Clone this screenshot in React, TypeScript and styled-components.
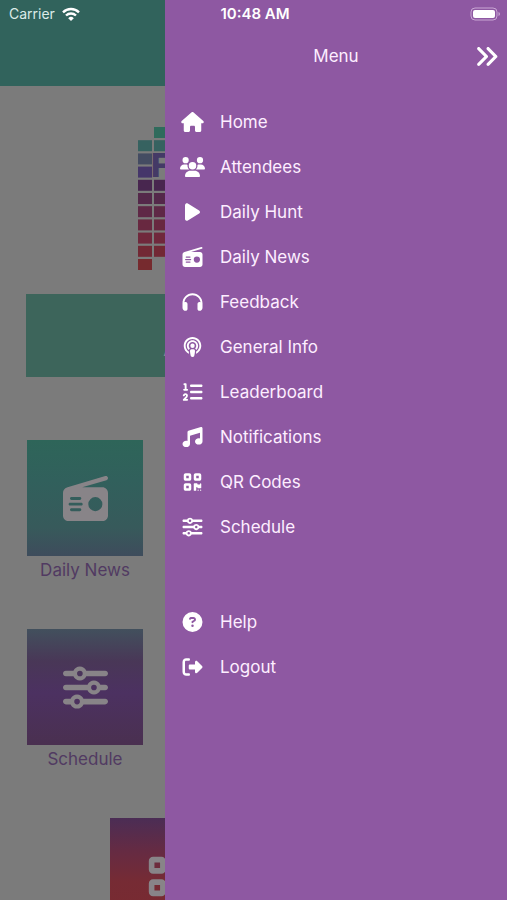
import React from "react";
import styled, { createGlobalStyle } from "styled-components";
import type { IconType } from "react-icons";
import {
  FaAnglesRight,
  FaCircleQuestion,
  FaHeadphones,
  FaHouse,
  FaListOl,
  FaMusic,
  FaPlay,
  FaPodcast,
  FaQrcode,
  FaRadio,
  FaRightFromBracket,
  FaSliders,
  FaUsers,
} from "react-icons/fa6";

const GlobalStyle = createGlobalStyle`
  *, *::before, *::after { box-sizing: border-box; }
  body {
    margin: 0;
    background: #7b7b7b;
    font-family: Inter, "Liberation Sans", sans-serif;
  }
`;

const Screen = styled.div`
  position: relative;
  height: 100vh;
  overflow: hidden;
`;

const Page = styled.main`
  display: flex;
  flex-direction: column;
`;

const TopBar = styled.header`
  height: 86px;
  background: #31635c;
`;

const LogoArea = styled.div`
  display: flex;
  justify-content: center;
  padding: 40px 0 24px;
`;

const Banner = styled.section`
  display: flex;
  align-items: center;
  height: 83px;
  margin: 0 26px 63px;
  padding: 20px 0 0 137px;
  background: #3d655b;
  color: #8b8b8b;
  font-size: 28px;
  line-height: 32px;
`;

const TileRow = styled.div<{ $inset?: boolean }>`
  display: flex;
  padding-left: ${(p) => (p.$inset ? "83px" : "0")};
  margin-bottom: 46px;
`;

const TileLink = styled.a`
  display: flex;
  flex-direction: column;
  align-items: center;
  gap: 2px;
  flex: 0 0 170px;
  color: #513a62;
  font-size: 17px;
  line-height: 25px;
  text-decoration: none;
`;

const TileArt = styled.span<{ $fill: string }>`
  display: flex;
  align-items: center;
  justify-content: center;
  width: 116px;
  height: 116px;
  background: ${(p) => p.$fill};
  color: #888488;

  svg {
    width: 45px;
    height: 45px;
  }
`;

const StatusBar = styled.div`
  position: absolute;
  inset: 0 0 auto;
  display: grid;
  grid-template-columns: 1fr auto 1fr;
  align-items: center;
  height: 28px;
  padding: 0 6px 0 9px;
  color: #fff;
  line-height: 20px;
`;

const Carrier = styled.span`
  display: flex;
  align-items: center;
  gap: 7px;
  color: #dcebe8;
  font-size: 14px;
`;

const WifiIcon = styled.svg`
  width: 18px;
  height: 14px;
`;

const Clock = styled.time`
  font-size: 15px;
  font-weight: 600;
`;

const Battery = styled.svg`
  justify-self: end;
  width: 31px;
  height: 14px;
`;

const Drawer = styled.aside`
  position: absolute;
  inset: 0 0 0 165px;
  background: #8e58a2;
  color: #fdeeff;
`;

const DrawerHeader = styled.div`
  display: grid;
  grid-template-columns: 1fr auto 1fr;
  align-items: center;
  height: 56px;
  margin: 28px 0 15px;
  padding: 0 8px;
`;

const DrawerTitle = styled.h1`
  grid-column: 2;
  margin: 0;
  font-size: 17px;
  font-weight: 400;
  line-height: 24px;
`;

const CloseButton = styled.button`
  display: flex;
  justify-self: end;
  padding: 0;
  border: 0;
  background: none;
  color: #fff;
  cursor: pointer;

  svg {
    width: 25px;
    height: 25px;
  }
`;

const MenuList = styled.ul`
  margin: 0 0 50px;
  padding: 0;
  list-style: none;
`;

const MenuLink = styled.a`
  display: flex;
  align-items: center;
  gap: 15px;
  height: 45px;
  padding-left: 15px;
  color: inherit;
  font-size: 17px;
  line-height: 24px;
  text-decoration: none;

  svg {
    width: 25px;
    height: 20px;
    color: #fff;
  }
`;

interface Item {
  label: string;
  Icon: IconType;
}

const mainItems: Item[] = [
  { label: "Home", Icon: FaHouse },
  { label: "Attendees", Icon: FaUsers },
  { label: "Daily Hunt", Icon: FaPlay },
  { label: "Daily News", Icon: FaRadio },
  { label: "Feedback", Icon: FaHeadphones },
  { label: "General Info", Icon: FaPodcast },
  { label: "Leaderboard", Icon: FaListOl },
  { label: "Notifications", Icon: FaMusic },
  { label: "QR Codes", Icon: FaQrcode },
  { label: "Schedule", Icon: FaSliders },
];

const accountItems: Item[] = [
  { label: "Help", Icon: FaCircleQuestion },
  { label: "Logout", Icon: FaRightFromBracket },
];

const barColors = [
  "#2f6b5c", "#366260", "#444c62", "#45366a", "#48264f", "#54284a",
  "#5f2846", "#682840", "#70283c", "#722834", "#762a2e",
];

function Logo() {
  return (
    <svg width="232" height="144" viewBox="0 0 232 144" role="img" aria-label="Logo">
      {barColors.map((color, row) => (
        <g key={color} fill={color}>
          {row > 0 && <rect x="0" y={1 + row * 13.2} width="14" height="11" />}
          {(row < 2 || row > 3) && row < 10 && (
            <rect x="16" y={1 + row * 13.2} width="14" height="11" />
          )}
        </g>
      ))}
      <text x="13" y="51" fill="#443a66" fontFamily="Inter, sans-serif" fontSize="33" fontWeight="800">
        F
      </text>
    </svg>
  );
}

function Wifi() {
  return (
    <WifiIcon viewBox="0 0 18 14" role="img" aria-label="Wi-Fi">
      <g fill="none" stroke="#fff" strokeWidth="2.400">
        <path d="M1 5.300a11.500 11.500 0 0 1 16 0" />
        <path d="M4 8.500a7.200 7.200 0 0 1 10 0" />
      </g>
      <path d="M9 14 6.200 11.200a4 4 0 0 1 5.600 0z" fill="#fff" />
    </WifiIcon>
  );
}

function Menu({ items }: { items: Item[] }) {
  return (
    <MenuList>
      {items.map(({ label, Icon }) => (
        <li key={label}>
          <MenuLink href="#">
            <Icon aria-hidden />
            {label}
          </MenuLink>
        </li>
      ))}
    </MenuList>
  );
}

function Tile({ label, Icon, fill }: { label?: string; Icon: IconType; fill: string }) {
  return (
    <TileLink href="#">
      <TileArt $fill={fill}>
        <Icon aria-hidden />
      </TileArt>
      {label}
    </TileLink>
  );
}

export default function App() {
  return (
    <Screen>
      <GlobalStyle />
      <Page>
        <TopBar />
        <LogoArea>
          <Logo />
        </LogoArea>
        <Banner>A</Banner>
        <TileRow>
          <Tile
            label="Daily News"
            Icon={FaRadio}
            fill="linear-gradient(#2e6559, #31605c 35%, #375a5b 75%, #3e4c5c)"
          />
        </TileRow>
        <TileRow>
          <Tile
            label="Schedule"
            Icon={FaSliders}
            fill="linear-gradient(#42505d, #493757 28%, #4c3161 55%, #4a3050)"
          />
        </TileRow>
        <TileRow $inset>
          <Tile Icon={FaQrcode} fill="linear-gradient(#4b2d55, #652b43 28%, #762b34 55%, #7a2a2e)" />
        </TileRow>
      </Page>
      <Drawer>
        <DrawerHeader>
          <DrawerTitle>Menu</DrawerTitle>
          <CloseButton type="button" aria-label="Close menu">
            <FaAnglesRight aria-hidden />
          </CloseButton>
        </DrawerHeader>
        <nav aria-label="Menu">
          <Menu items={mainItems} />
          <Menu items={accountItems} />
        </nav>
      </Drawer>
      <StatusBar>
        <Carrier>
          Carrier
          <Wifi />
        </Carrier>
        <Clock>10:48 AM</Clock>
        <Battery viewBox="0 0 31 14" role="img" aria-label="Battery full">
          <rect x="1" y="1" width="26" height="12" rx="4" fill="none" stroke="#c9a6d4" />
          <rect x="3" y="3" width="22" height="8" rx="2" fill="#fff" />
          <path d="M28.500 5v4q1.500-.5 1.500-2t-1.500-2z" fill="#c9a6d4" />
        </Battery>
      </StatusBar>
    </Screen>
  );
}
